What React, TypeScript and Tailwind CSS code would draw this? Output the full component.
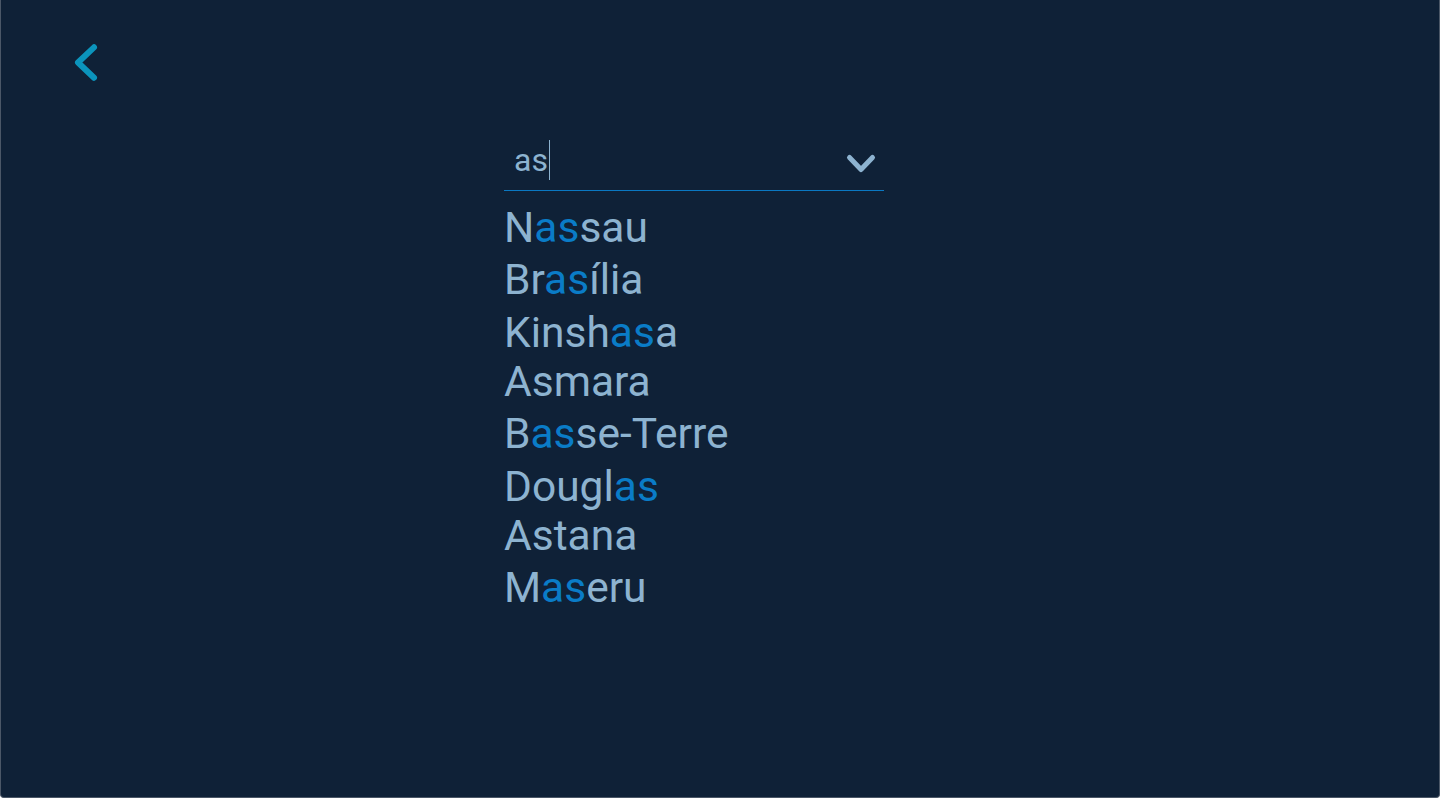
import React from "react";

const cities: { parts: [string, string, string] | null; name: string }[] = [
    { name: "Nassau", parts: ["N", "as", "sau"] },
    { name: "Brasília", parts: ["Br", "as", "ília"] },
    { name: "Kinshasa", parts: ["Kinsh", "as", "a"] },
    { name: "Asmara", parts: null },
    { name: "Basse-Terre", parts: ["B", "as", "se-Terre"] },
    { name: "Douglas", parts: ["Dougl", "as", ""] },
    { name: "Astana", parts: null },
    { name: "Maseru", parts: ["M", "as", "eru"] },
];

const App: React.FC = () => {
    return (
        <div
            className="h-[798px] w-full bg-[#0f2137] border-l border-r border-b border-[#4b5767] rounded-b-[4px] overflow-hidden"
            style={{ fontFamily: "Roboto, 'Noto Sans', sans-serif" }}
        >
            <div className="pt-[40px] pl-[70px]">
                <button className="block w-[30px] h-[44px]" aria-label="Back">
                    <svg width="30" height="44" viewBox="0 0 30 44" fill="none">
                        <path d="M23 7.3 L7 22.5 L23 37.7" stroke="#0b94bc" strokeWidth="6" strokeLinecap="round" strokeLinejoin="round" />
                    </svg>
                </button>
            </div>

            <div className="ml-[503px] w-[380px] mt-[56px]">
                <div className="flex justify-between h-[51px] border-b border-[#0a78c2]">
                    <div className="flex items-start pl-[10px] text-[32px] leading-[40px] text-[#8db3d0]">
                        <span>as</span>
                        <span className="inline-block w-px h-[40px] bg-[#8db3d0] ml-px" />
                    </div>
                    <svg className="mt-[11px] mr-[7px]" width="32" height="24" viewBox="0 0 32 24" fill="none">
                        <path d="M4.5 6.5 L16 18.5 L27.5 6.5" stroke="#8db3d0" strokeWidth="5" strokeLinecap="round" strokeLinejoin="round" />
                    </svg>
                </div>

                <ul className="mt-[8px] text-[42.5px] leading-[49px] text-[#8db3d0]">
                    {cities.map((c) => (
                        <li key={c.name} className={c.parts ? "pt-[3.5px]" : ""}>
                            {c.parts ? (
                                <>
                                    {c.parts[0]}
                                    <span className="text-[#0a7cc7]">{c.parts[1]}</span>
                                    {c.parts[2]}
                                </>
                            ) : (
                                c.name
                            )}
                        </li>
                    ))}
                </ul>
            </div>
        </div>
    );
};

export default App;
